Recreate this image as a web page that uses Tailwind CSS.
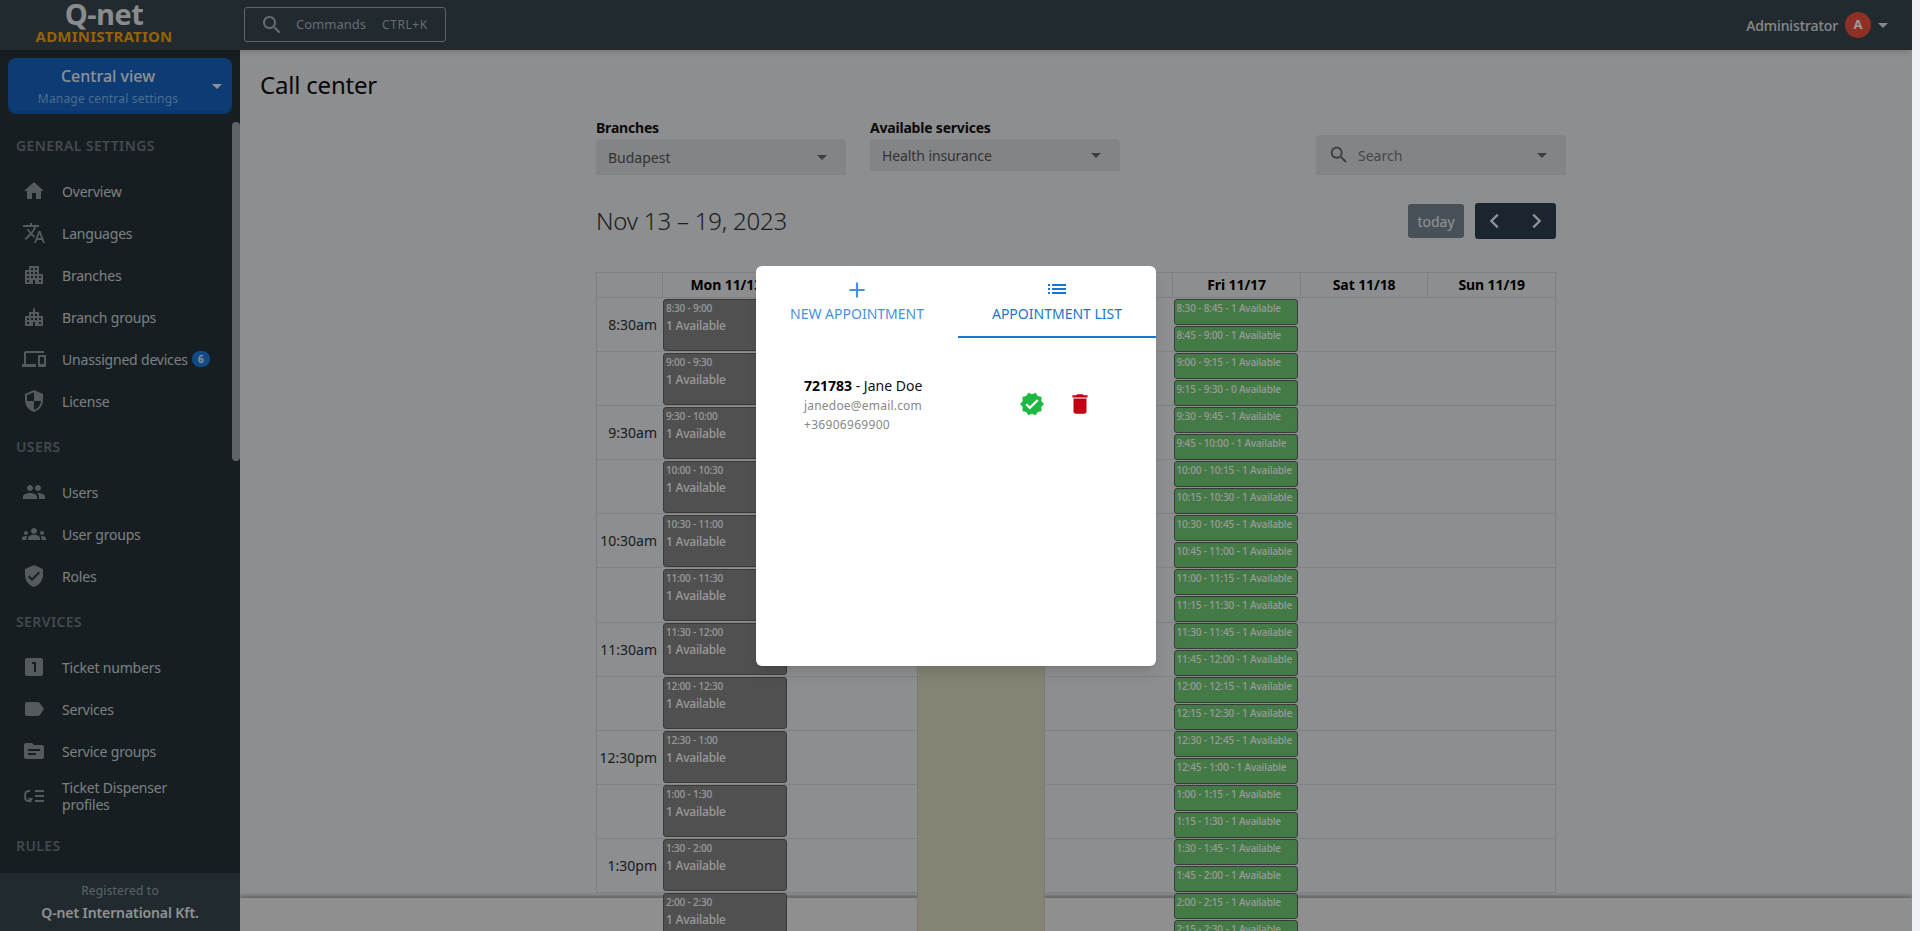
<!DOCTYPE html>
<html lang="en">
<head>
    <meta charset="UTF-8">
    <title>Call center</title>
    <script src="https://cdn.jsdelivr.net/npm/@tailwindcss/browser@4"></script>
</head>
<body class="relative h-[931px] overflow-hidden bg-[#edf1f5] font-['Noto_Sans',sans-serif]">
    <div class="relative w-[1912px] h-[931px] bg-[#ebedf0] overflow-hidden">
        <!-- Top bar -->
        <header class="relative z-30 flex items-start h-[50px] bg-[#37474f] shadow-md">
            <div class="flex flex-col items-center w-[208px] mr-[32px] pt-[2px]">
                <span class="h-[24px] text-[29px] leading-[24px] font-bold tracking-[-0.5px] text-[#e6e8e9] font-['Open_Sans',sans-serif]">Q-net</span>
                <span class="mt-[2px] text-[15px] leading-[16px] font-bold tracking-[0.2px] text-[#f7a30d]">ADMINISTRATION</span>
            </div>
            <div class="flex items-center w-[202px] h-[35px] mt-[7px] ml-[4px] border border-[#9da7ad] rounded-[3px] pl-[15px]">
                <svg class="w-[24px] h-[24px] fill-[#acb4b9]" viewBox="0 0 24 24"><path d="M15.5 14h-.79l-.28-.27C15.41 12.59 16 11.11 16 9.5 16 5.91 13.09 3 9.5 3S3 5.91 3 9.5 5.91 16 9.5 16c1.61 0 3.09-.59 4.23-1.57l.27.28v.79l5 4.99L20.49 19l-4.99-5zm-6 0C7.01 14 5 11.99 5 9.5S7.01 5 9.5 5 14 7.01 14 9.5 11.99 14 9.5 14z"/></svg>
                <span class="ml-[12px] text-[13px] text-[#acb4b9]">Commands</span>
                <span class="ml-[16px] text-[12px] tracking-[0.6px] text-[#acb4b9]">CTRL+K</span>
            </div>
            <div class="flex items-center h-[50px] ml-auto pr-[24px]">
                <span class="text-[14px] font-medium tracking-[-0.1px] text-[#e3e3e3]">Administrator</span>
                <span class="flex items-center justify-center w-[26px] h-[26px] ml-[7px] rounded-full bg-[#ee5040] text-[13px] font-bold text-white">A</span>
                <span class="w-0 h-0 ml-[7px] border-x-[5px] border-x-transparent border-t-[5px] border-t-[#e3e3e3]"></span>
            </div>
        </header>

        <div class="flex h-[881px]">
            <!-- Sidebar -->
            <aside class="relative z-20 flex flex-col w-[240px] h-[881px] bg-[#263238]">
                <div class="relative flex flex-col items-center shrink-0 w-[224px] h-[56px] mt-[8px] ml-[8px] pr-[24px] rounded-[8px] bg-[#1565c0] shadow-[inset_0_-3px_0_rgba(0,0,0,0.08)]">
                    <span class="mt-[7px] text-[16px] leading-[22px] font-medium text-[#eaf1fb]">Central view</span>
                    <span class="mt-[4px] text-[12px] leading-[16px] tracking-[0.2px] text-[#80b4ee]">Manage central settings</span>
                    <span class="absolute right-[10px] top-[26px] w-0 h-0 border-x-[5px] border-x-transparent border-t-[5px] border-t-[#eaf1fb]"></span>
                </div>

                <nav class="flex-1 overflow-hidden tracking-[-0.2px]">
                    <p class="h-[20px] mt-[22px] mb-[14px] pl-[16px] text-[14px] leading-[20px] font-semibold tracking-[0.4px] text-[#707a81]">GENERAL SETTINGS</p>
                    <a class="flex items-center h-[42px] pl-[22px] text-[14px] text-[#cfd5da]">
                        <svg class="w-[24px] h-[24px] mr-[16px] fill-[#8c969d]" viewBox="0 0 24 24"><path d="M10 20v-6h4v6h5v-8h3L12 3 2 12h3v8z"/></svg>Overview</a>
                    <a class="flex items-center h-[42px] pl-[22px] text-[14px] text-[#cfd5da]">
                        <svg class="w-[24px] h-[24px] mr-[16px] fill-[#8c969d]" viewBox="0 0 24 24"><path d="M12.87 15.07l-2.54-2.51.03-.03c1.74-1.94 2.98-4.17 3.71-6.53H17V4h-7V2H8v2H1v1.99h11.17C11.5 7.92 10.44 9.75 9 11.35 8.07 10.32 7.3 9.19 6.69 8h-2c.73 1.63 1.73 3.17 2.98 4.56l-5.09 5.02L4 19l5-5 3.11 3.11.76-2.04zM18.5 10h-2L12 22h2l1.12-3h4.75L21 22h2l-4.5-12zm-2.62 7l1.62-4.33L19.12 17h-3.24z"/></svg>Languages</a>
                    <a class="flex items-center h-[42px] pl-[22px] text-[14px] text-[#cfd5da]">
                        <svg class="w-[24px] h-[24px] mr-[16px] fill-[#8c969d]" viewBox="0 0 24 24"><path d="M17 11V3H7v4H3v14h8v-4h2v4h8V11h-4zM7 19H5v-2h2v2zm0-4H5v-2h2v2zm0-4H5V9h2v2zm4 4H9v-2h2v2zm0-4H9V9h2v2zm0-4H9V5h2v2zm4 8h-2v-2h2v2zm0-4h-2V9h2v2zm0-4h-2V5h2v2zm4 12h-2v-2h2v2zm0-4h-2v-2h2v2z"/></svg>Branches</a>
                    <a class="flex items-center h-[42px] pl-[22px] text-[14px] text-[#cfd5da]">
                        <svg class="w-[24px] h-[24px] mr-[16px] fill-[#8c969d]" viewBox="0 0 24 24"><path d="M12 2l-1 2.5V7H7v4H3v10h8v-4h2v4h8V11h-4V7h-4V4.500zM7 19H5v-2h2v2zm0-4H5v-2h2v2zm4 0H9v-2h2v2zm0-4H9V9h2v2zm4 4h-2v-2h2v2zm0-4h-2V9h2v2zm4 8h-2v-2h2v2zm0-4h-2v-2h2v2z"/></svg>Branch groups</a>
                    <a class="flex items-center h-[42px] pl-[22px] text-[14px] text-[#cfd5da]">
                        <svg class="w-[24px] h-[24px] mr-[16px] fill-[#8c969d]" viewBox="0 0 24 24"><path d="M4 6h18V4H4c-1.100 0-2 .9-2 2v11H0v3h14v-3H4V6zm19 2h-6c-.55 0-1 .45-1 1v10c0 .55.45 1 1 1h6c.55 0 1-.45 1-1V9c0-.55-.45-1-1-1zm-1 9h-4v-7h4v7z"/></svg>Unassigned devices
                        <span class="flex items-center justify-center w-[18px] h-[16px] ml-[4px] rounded-full bg-[#1a7fe0] text-[10px] font-bold text-[#e8eef5]">6</span></a>
                    <a class="flex items-center h-[42px] pl-[22px] text-[14px] text-[#cfd5da]">
                        <svg class="w-[24px] h-[24px] mr-[16px] fill-[#8c969d]" viewBox="0 0 24 24"><path d="M12 1L3 5v6c0 5.550 3.840 10.740 9 12 5.160-1.260 9-6.450 9-12V5l-9-4zm0 10.990h7c-.53 4.120-3.280 7.790-7 8.940V12H5V6.300l7-3.110v8.800z"/></svg>License</a>

                    <p class="h-[20px] mt-[15px] mb-[14px] pl-[16px] text-[14px] leading-[20px] font-semibold tracking-[0.4px] text-[#707a81]">USERS</p>
                    <a class="flex items-center h-[42px] pl-[22px] text-[14px] text-[#cfd5da]">
                        <svg class="w-[24px] h-[24px] mr-[16px] fill-[#8c969d]" viewBox="0 0 24 24"><path d="M16 11c1.660 0 2.990-1.340 2.990-3S17.660 5 16 5c-1.660 0-3 1.340-3 3s1.340 3 3 3zm-8 0c1.660 0 2.990-1.340 2.990-3S9.660 5 8 5C6.340 5 5 6.340 5 8s1.340 3 3 3zm0 2c-2.330 0-7 1.170-7 3.500V19h14v-2.500c0-2.330-4.670-3.500-7-3.500zm8 0c-.29 0-.62.02-.97.05 1.160.84 1.970 1.970 1.970 3.450V19h6v-2.500c0-2.330-4.670-3.500-7-3.500z"/></svg>Users</a>
                    <a class="flex items-center h-[42px] pl-[22px] text-[14px] text-[#cfd5da]">
                        <svg class="w-[24px] h-[24px] mr-[16px] fill-[#8c969d]" viewBox="0 0 24 24"><path d="M12 12.750c1.630 0 3.070.39 4.240.9 1.080.48 1.760 1.560 1.760 2.730V18H6v-1.610c0-1.180.68-2.260 1.760-2.730 1.170-.52 2.610-.91 4.240-.91zM4 13c1.100 0 2-.9 2-2s-.9-2-2-2-2 .9-2 2 .9 2 2 2zm1.130 1.100c-.37-.06-.74-.1-1.130-.1-.99 0-1.930.21-2.780.58C.48 14.900 0 15.620 0 16.430V18h4.500v-1.610c0-.83.23-1.610.63-2.290zM20 13c1.100 0 2-.9 2-2s-.9-2-2-2-2 .9-2 2 .9 2 2 2zm4 3.430c0-.81-.48-1.530-1.220-1.850-.85-.37-1.790-.58-2.780-.58-.39 0-.76.04-1.130.1.4.68.63 1.460.63 2.290V18H24v-1.570zM12 6c1.660 0 3 1.340 3 3s-1.340 3-3 3-3-1.340-3-3 1.340-3 3-3z"/></svg>User groups</a>
                    <a class="flex items-center h-[42px] pl-[22px] text-[14px] text-[#cfd5da]">
                        <svg class="w-[24px] h-[24px] mr-[16px] fill-[#8c969d]" viewBox="0 0 24 24"><path d="M12 1L3 5v6c0 5.550 3.840 10.740 9 12 5.160-1.260 9-6.450 9-12V5l-9-4zm-2 16l-4-4 1.410-1.410L10 14.170l6.590-6.590L18 9l-8 8z"/></svg>Roles</a>

                    <p class="h-[20px] mt-[15px] mb-[14px] pl-[16px] text-[14px] leading-[20px] font-semibold tracking-[0.4px] text-[#707a81]">SERVICES</p>
                    <a class="flex items-center h-[42px] pl-[22px] text-[14px] text-[#cfd5da]">
                        <svg class="w-[24px] h-[24px] mr-[16px] fill-[#8c969d]" viewBox="0 0 24 24"><path d="M19 3H5c-1.100 0-2 .9-2 2v14c0 1.100.9 2 2 2h14c1.100 0 2-.9 2-2V5c0-1.100-.9-2-2-2zm-5 14h-2V9h-2V7h4v10z"/></svg>Ticket numbers</a>
                    <a class="flex items-center h-[42px] pl-[22px] text-[14px] text-[#cfd5da]">
                        <svg class="w-[24px] h-[24px] mr-[16px] fill-[#8c969d]" viewBox="0 0 24 24"><path d="M17.630 5.840C17.270 5.330 16.670 5 16 5L5 5.010C3.900 5.010 3 5.900 3 7v10c0 1.100.9 1.990 2 1.990L16 19c.67 0 1.270-.33 1.630-.84L22 12l-4.370-6.160z"/></svg>Services</a>
                    <a class="flex items-center h-[42px] pl-[22px] text-[14px] text-[#cfd5da]">
                        <svg class="w-[24px] h-[24px] mr-[16px] fill-[#8c969d]" viewBox="0 0 24 24"><path d="M20 6h-8l-2-2H4c-1.100 0-1.990.9-1.990 2L2 18c0 1.100.9 2 2 2h16c1.100 0 2-.9 2-2V8c0-1.100-.9-2-2-2zm-6 10H6v-2h8v2zm4-4H6v-2h12v2z"/></svg>Service groups</a>
                    <a class="flex items-center h-[48px] pl-[22px] text-[14px] leading-[17px] text-[#cfd5da]">
                        <svg class="shrink-0 w-[24px] h-[24px] mr-[16px] fill-none stroke-[#8c969d] stroke-2" viewBox="0 0 24 24"><path d="M8 7H6.500C4.500 7 3 9 3 12s1.500 5 3.500 5H8M13 7h9M13 12h9M13 17h9"/><path class="fill-[#8c969d] stroke-none" d="M6 14h5l-2.500 5z"/></svg>
                        <span>Ticket Dispenser<br>profiles</span></a>

                    <p class="h-[20px] mt-[16px] pl-[16px] text-[14px] leading-[20px] font-semibold tracking-[0.4px] text-[#707a81]">RULES</p>
                </nav>

                <div class="flex flex-col items-center shrink-0 h-[58px] bg-[#37474f]">
                    <span class="mt-[9px] text-[12px] leading-[18px] tracking-[0.2px] text-[#9aa5ab]">Registered to</span>
                    <span class="mt-[3px] text-[14px] leading-[20px] font-semibold tracking-[-0.1px] text-[#f0f0f0]">Q-net International Kft.</span>
                </div>

                <div class="absolute right-0 top-[72px] w-[8px] h-[339px] rounded-[4px] bg-[#9ea7ad]"></div>
            </aside>

            <!-- Main -->
            <main class="relative flex-1 h-[881px] overflow-hidden">
                <h1 class="mt-[19px] ml-[20px] text-[24px] leading-[32px] font-normal tracking-[-0.2px] text-[#0c0c0c]">Call center</h1>

                <div class="ml-[356px] mt-[18px]">
                    <!-- Filters -->
                    <div class="flex items-start">
                        <div class="w-[250px]">
                            <p class="h-[20px] text-[14px] leading-[18px] font-bold tracking-[-0.2px] text-[#111]">Branches</p>
                            <div class="flex items-center justify-between h-[36px] px-[12px] rounded-t-[4px] bg-[#dadde0] text-[14px] text-[#555]">
                                Budapest<span class="w-0 h-0 mr-[7px] border-x-[5px] border-x-transparent border-t-[5px] border-t-[#666]"></span>
                            </div>
                        </div>
                        <div class="w-[250px] ml-[24px]">
                            <p class="h-[20px] text-[14px] leading-[18px] font-bold tracking-[-0.2px] text-[#111]">Available services</p>
                            <div class="flex items-center justify-between h-[32px] px-[12px] rounded-t-[4px] bg-[#dadde0] text-[14px] tracking-[-0.1px] text-[#555]">
                                Health insurance<span class="w-0 h-0 mr-[7px] border-x-[5px] border-x-transparent border-t-[5px] border-t-[#666]"></span>
                            </div>
                        </div>
                        <div class="flex items-center w-[250px] h-[40px] mt-[16px] ml-[196px] pl-[12px] pr-[19px] rounded-t-[4px] bg-[#dadde0] text-[14px] text-[#777]">
                            <svg class="w-[22px] h-[22px] mr-[8px] fill-[#666]" viewBox="0 0 24 24"><path d="M15.500 14h-.79l-.28-.27C15.410 12.590 16 11.110 16 9.500 16 5.910 13.090 3 9.500 3S3 5.910 3 9.500 5.910 16 9.500 16c1.610 0 3.090-.59 4.230-1.570l.27.28v.79l5 4.990L20.490 19l-4.990-5zm-6 0C7.010 14 5 11.990 5 9.500S7.010 5 9.500 5 14 7.010 14 9.500 11.990 14 9.500 14z"/></svg>
                            Search<span class="w-0 h-0 ml-auto border-x-[5px] border-x-transparent border-t-[5px] border-t-[#666]"></span>
                        </div>
                    </div>

                    <!-- Date toolbar -->
                    <div class="flex items-center justify-between w-[960px] h-[36px] mt-[28px]">
                        <h2 class="text-[24px] font-light tracking-[-0.2px] text-[#333]">Nov 13 – 19, 2023</h2>
                        <div class="flex items-center">
                            <button class="w-[56px] h-[34px] rounded-[3px] bg-[#7b8793] text-[14px] text-[#eef5fa]">today</button>
                            <div class="flex items-center justify-around w-[81px] h-[36px] ml-[11px] rounded-[3px] bg-[#2d3e50]">
                                <svg class="w-[22px] h-[22px] fill-none stroke-[#eef4fa] stroke-[2.500]" viewBox="0 0 24 24"><path d="M15 5l-7 7 7 7"/></svg>
                                <svg class="w-[22px] h-[22px] fill-none stroke-[#eef4fa] stroke-[2.500]" viewBox="0 0 24 24"><path d="M9 5l7 7-7 7"/></svg>
                            </div>
                        </div>
                    </div>

                    <!-- Calendar -->
                    <div class="relative w-[960px] mt-[33px]">
                        <div class="grid grid-cols-[65px_repeat(7,1fr)] h-[26px] border border-[#d4d6d8] text-[14px] leading-[24px] font-bold tracking-[-0.1px] text-center text-black">
                            <div></div>
                            <div class="border-l border-[#d4d6d8]">Mon 11/13</div>
                            <div class="border-l border-[#d4d6d8]">Tue 11/14</div>
                            <div class="border-l border-[#d4d6d8]">Wed 11/15</div>
                            <div class="border-l border-[#d4d6d8]">Thu 11/16</div>
                            <div class="border-l border-[#d4d6d8]">Fri 11/17</div>
                            <div class="border-l border-[#d4d6d8]">Sat 11/18</div>
                            <div class="border-l border-[#d4d6d8]">Sun 11/19</div>
                        </div>

                        <!-- Time rows -->
                        <div class="border-x border-[#d4d6d8] text-[14px] text-[#2f2f2f]">
                            <div class="flex items-center h-[54.100px] border-b border-dotted border-[#c4c6c8]"><span class="w-[60px] text-right">8:30am</span></div>
                            <div class="h-[54.100px] border-b border-[#d4d6d8]"></div>
                            <div class="flex items-center h-[54.100px] border-b border-dotted border-[#c4c6c8]"><span class="w-[60px] text-right">9:30am</span></div>
                            <div class="h-[54.100px] border-b border-[#d4d6d8]"></div>
                            <div class="flex items-center h-[54.100px] border-b border-dotted border-[#c4c6c8]"><span class="w-[60px] text-right">10:30am</span></div>
                            <div class="h-[54.100px] border-b border-[#d4d6d8]"></div>
                            <div class="flex items-center h-[54.100px] border-b border-dotted border-[#c4c6c8]"><span class="w-[60px] text-right">11:30am</span></div>
                            <div class="h-[54.100px] border-b border-[#d4d6d8]"></div>
                            <div class="flex items-center h-[54.100px] border-b border-dotted border-[#c4c6c8]"><span class="w-[60px] text-right">12:30pm</span></div>
                            <div class="h-[54.100px] border-b border-[#d4d6d8]"></div>
                            <div class="flex items-center h-[54.100px] border-b border-dotted border-[#c4c6c8]"><span class="w-[60px] text-right">1:30pm</span></div>
                        </div>

                        <!-- Day columns, over the rows and the page footer -->
                        <div class="absolute left-0 top-[26px] z-10 grid grid-cols-[65px_repeat(7,1fr)] w-[960px] h-[700px]">
                            <div></div>
                            <div class="flex flex-col px-[2px] pt-[1px] text-[12px] font-medium tracking-[-0.2px] text-white">
                                <div class="shrink-0 h-[52px] mb-[2px] rounded-[3px] border border-[#616161] bg-[#868686] pl-[2px]"><p class="text-[10px] leading-[16px]">8:30 - 9:00</p><p class="leading-[20px]">1 Available</p></div>
                                <div class="shrink-0 h-[52px] mb-[2px] rounded-[3px] border border-[#616161] bg-[#868686] pl-[2px]"><p class="text-[10px] leading-[16px]">9:00 - 9:30</p><p class="leading-[20px]">1 Available</p></div>
                                <div class="shrink-0 h-[52px] mb-[2px] rounded-[3px] border border-[#616161] bg-[#868686] pl-[2px]"><p class="text-[10px] leading-[16px]">9:30 - 10:00</p><p class="leading-[20px]">1 Available</p></div>
                                <div class="shrink-0 h-[52px] mb-[2px] rounded-[3px] border border-[#616161] bg-[#868686] pl-[2px]"><p class="text-[10px] leading-[16px]">10:00 - 10:30</p><p class="leading-[20px]">1 Available</p></div>
                                <div class="shrink-0 h-[52px] mb-[2px] rounded-[3px] border border-[#616161] bg-[#868686] pl-[2px]"><p class="text-[10px] leading-[16px]">10:30 - 11:00</p><p class="leading-[20px]">1 Available</p></div>
                                <div class="shrink-0 h-[52px] mb-[2px] rounded-[3px] border border-[#616161] bg-[#868686] pl-[2px]"><p class="text-[10px] leading-[16px]">11:00 - 11:30</p><p class="leading-[20px]">1 Available</p></div>
                                <div class="shrink-0 h-[52px] mb-[2px] rounded-[3px] border border-[#616161] bg-[#868686] pl-[2px]"><p class="text-[10px] leading-[16px]">11:30 - 12:00</p><p class="leading-[20px]">1 Available</p></div>
                                <div class="shrink-0 h-[52px] mb-[2px] rounded-[3px] border border-[#616161] bg-[#868686] pl-[2px]"><p class="text-[10px] leading-[16px]">12:00 - 12:30</p><p class="leading-[20px]">1 Available</p></div>
                                <div class="shrink-0 h-[52px] mb-[2px] rounded-[3px] border border-[#616161] bg-[#868686] pl-[2px]"><p class="text-[10px] leading-[16px]">12:30 - 1:00</p><p class="leading-[20px]">1 Available</p></div>
                                <div class="shrink-0 h-[52px] mb-[2px] rounded-[3px] border border-[#616161] bg-[#868686] pl-[2px]"><p class="text-[10px] leading-[16px]">1:00 - 1:30</p><p class="leading-[20px]">1 Available</p></div>
                                <div class="shrink-0 h-[52px] mb-[2px] rounded-[3px] border border-[#616161] bg-[#868686] pl-[2px]"><p class="text-[10px] leading-[16px]">1:30 - 2:00</p><p class="leading-[20px]">1 Available</p></div>
                                <div class="shrink-0 h-[52px] mb-[2px] rounded-[3px] border border-[#616161] bg-[#868686] pl-[2px]"><p class="text-[10px] leading-[16px]">2:00 - 2:30</p><p class="leading-[20px]">1 Available</p></div>
                            </div>
                            <div></div>
                            <div class="border-x border-[#d0cfb4] bg-[#dddbc2]"></div>
                            <div></div>
                            <div class="flex flex-col px-[2px] pt-[1px] text-[10px] leading-[16px] font-medium tracking-[-0.15px] text-white">
                                <div class="shrink-0 h-[25.500px] mb-[1.500px] rounded-[3px] border border-[#616161] bg-[#70cc74] pl-[1px]">8:30 - 8:45 - 1 Available</div>
                                <div class="shrink-0 h-[25.500px] mb-[1.500px] rounded-[3px] border border-[#616161] bg-[#70cc74] pl-[1px]">8:45 - 9:00 - 1 Available</div>
                                <div class="shrink-0 h-[25.500px] mb-[1.500px] rounded-[3px] border border-[#616161] bg-[#70cc74] pl-[1px]">9:00 - 9:15 - 1 Available</div>
                                <div class="shrink-0 h-[25.500px] mb-[1.500px] rounded-[3px] border border-[#616161] bg-[#70cc74] pl-[1px]">9:15 - 9:30 - 0 Available</div>
                                <div class="shrink-0 h-[25.500px] mb-[1.500px] rounded-[3px] border border-[#616161] bg-[#70cc74] pl-[1px]">9:30 - 9:45 - 1 Available</div>
                                <div class="shrink-0 h-[25.500px] mb-[1.500px] rounded-[3px] border border-[#616161] bg-[#70cc74] pl-[1px]">9:45 - 10:00 - 1 Available</div>
                                <div class="shrink-0 h-[25.500px] mb-[1.500px] rounded-[3px] border border-[#616161] bg-[#70cc74] pl-[1px]">10:00 - 10:15 - 1 Available</div>
                                <div class="shrink-0 h-[25.500px] mb-[1.500px] rounded-[3px] border border-[#616161] bg-[#70cc74] pl-[1px]">10:15 - 10:30 - 1 Available</div>
                                <div class="shrink-0 h-[25.500px] mb-[1.500px] rounded-[3px] border border-[#616161] bg-[#70cc74] pl-[1px]">10:30 - 10:45 - 1 Available</div>
                                <div class="shrink-0 h-[25.500px] mb-[1.500px] rounded-[3px] border border-[#616161] bg-[#70cc74] pl-[1px]">10:45 - 11:00 - 1 Available</div>
                                <div class="shrink-0 h-[25.500px] mb-[1.500px] rounded-[3px] border border-[#616161] bg-[#70cc74] pl-[1px]">11:00 - 11:15 - 1 Available</div>
                                <div class="shrink-0 h-[25.500px] mb-[1.500px] rounded-[3px] border border-[#616161] bg-[#70cc74] pl-[1px]">11:15 - 11:30 - 1 Available</div>
                                <div class="shrink-0 h-[25.500px] mb-[1.500px] rounded-[3px] border border-[#616161] bg-[#70cc74] pl-[1px]">11:30 - 11:45 - 1 Available</div>
                                <div class="shrink-0 h-[25.500px] mb-[1.500px] rounded-[3px] border border-[#616161] bg-[#70cc74] pl-[1px]">11:45 - 12:00 - 1 Available</div>
                                <div class="shrink-0 h-[25.500px] mb-[1.500px] rounded-[3px] border border-[#616161] bg-[#70cc74] pl-[1px]">12:00 - 12:15 - 1 Available</div>
                                <div class="shrink-0 h-[25.500px] mb-[1.500px] rounded-[3px] border border-[#616161] bg-[#70cc74] pl-[1px]">12:15 - 12:30 - 1 Available</div>
                                <div class="shrink-0 h-[25.500px] mb-[1.500px] rounded-[3px] border border-[#616161] bg-[#70cc74] pl-[1px]">12:30 - 12:45 - 1 Available</div>
                                <div class="shrink-0 h-[25.500px] mb-[1.500px] rounded-[3px] border border-[#616161] bg-[#70cc74] pl-[1px]">12:45 - 1:00 - 1 Available</div>
                                <div class="shrink-0 h-[25.500px] mb-[1.500px] rounded-[3px] border border-[#616161] bg-[#70cc74] pl-[1px]">1:00 - 1:15 - 1 Available</div>
                                <div class="shrink-0 h-[25.500px] mb-[1.500px] rounded-[3px] border border-[#616161] bg-[#70cc74] pl-[1px]">1:15 - 1:30 - 1 Available</div>
                                <div class="shrink-0 h-[25.500px] mb-[1.500px] rounded-[3px] border border-[#616161] bg-[#70cc74] pl-[1px]">1:30 - 1:45 - 1 Available</div>
                                <div class="shrink-0 h-[25.500px] mb-[1.500px] rounded-[3px] border border-[#616161] bg-[#70cc74] pl-[1px]">1:45 - 2:00 - 1 Available</div>
                                <div class="shrink-0 h-[25.500px] mb-[1.500px] rounded-[3px] border border-[#616161] bg-[#70cc74] pl-[1px]">2:00 - 2:15 - 1 Available</div>
                                <div class="shrink-0 h-[25.500px] mb-[1.500px] rounded-[3px] border border-[#616161] bg-[#70cc74] pl-[1px]">2:15 - 2:30 - 1 Available</div>
                            </div>
                            <div></div>
                            <div></div>
                        </div>
                    </div>
                </div>

                <!-- Page footer -->
                <div class="absolute bottom-0 inset-x-0 z-[5] h-[33px] bg-[#eeeeee] shadow-[0_-2px_4px_rgba(0,0,0,0.35)]"></div>
            </main>
        </div>

        <!-- Dialog -->
        <div class="absolute inset-0 z-40 flex items-center justify-center bg-black/40">
            <div class="w-[400px] h-[400px] rounded-[6px] bg-white shadow-lg">
                <div class="grid grid-cols-[202px_198px] h-[72px] text-[14px] text-center">
                    <div class="flex flex-col items-center pt-[11px] text-[#4a90e2]">
                        <svg class="w-[26px] h-[26px] fill-[#4a90e2]" viewBox="0 0 24 24"><path d="M19 13h-6v6h-2v-6H5v-2h6V5h2v6h6v2z"/></svg>
                        <span class="mt-[1px] leading-[20px]">NEW APPOINTMENT</span>
                    </div>
                    <div class="flex flex-col items-center pt-[11px] border-b-2 border-[#1976d2] text-[#1976d2]">
                        <svg class="w-[24px] h-[24px] fill-[#1976d2]" viewBox="0 0 24 24"><path d="M3 13h2v-2H3v2zm0 4h2v-2H3v2zm0-8h2V7H3v2zm4 4h14v-2H7v2zm0 4h14v-2H7v2zM7 7v2h14V7H7z"/></svg>
                        <span class="mt-[3px] leading-[20px]">APPOINTMENT LIST</span>
                    </div>
                </div>
                <div class="flex items-center mt-[38px] pl-[48px]">
                    <div class="w-[216px]">
                        <p class="text-[14px] leading-[20px] text-[#111]"><b class="font-bold text-black">721783</b> - Jane Doe</p>
                        <p class="text-[12px] leading-[19px] tracking-[0.2px] text-[#888]">janedoe@email.com</p>
                        <p class="text-[12px] leading-[19px] tracking-[0.3px] text-[#888]">+36906969900</p>
                    </div>
                    <svg class="w-[26px] h-[26px] mt-[-1px] ml-[-1px] fill-[#1db83f]" viewBox="0 0 24 24"><path d="M23 12l-2.440-2.780.34-3.680-3.610-.82-1.890-3.180L12 3 8.600 1.540 6.710 4.720l-3.610.81.34 3.680L1 12l2.440 2.780-.34 3.690 3.610.82 1.890 3.180L12 21l3.400 1.460 1.890-3.180 3.610-.82-.34-3.680L23 12zm-13 5l-4-4 1.410-1.410L10 14.170l6.590-6.590L18 9l-8 8z"/></svg>
                    <svg class="w-[26px] h-[26px] mt-[-1px] ml-[22px] fill-[#c40012]" viewBox="0 0 24 24"><path d="M6 19c0 1.100.9 2 2 2h8c1.100 0 2-.9 2-2V7H6v12zM19 4h-3.500l-1-1h-5l-1 1H5v2h14V4z"/></svg>
                </div>
            </div>
        </div>
    </div>
</body>
</html>
